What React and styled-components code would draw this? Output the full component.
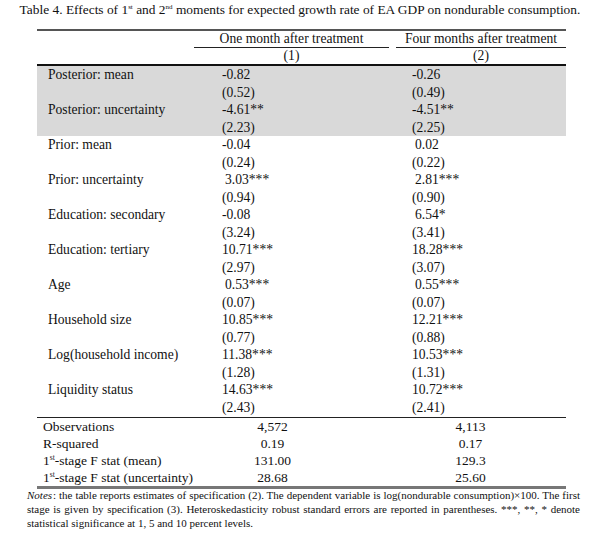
import { Fragment } from 'react';
import styled, { createGlobalStyle } from 'styled-components';

const GlobalStyle = createGlobalStyle`
    body {
        margin: 0;
        background: #fff;
        font-family: "Liberation Serif", "Times New Roman", serif;
        color: #111;
    }
`;

const Page = styled.div`
    width: 600px;
    height: 541px;
    padding-top: 2px;
    box-sizing: border-box;
`;

const Title = styled.div`
    font-size: 13.4px;
    line-height: 16px;
    text-align: center;
    white-space: nowrap;
    sup {
        font-size: 7px;
        vertical-align: 5px;
        line-height: 0;
    }
`;

const Table = styled.div`
    margin: 11px 0 0 37px;
    width: 529px;
    display: grid;
    grid-template-columns: 151px 207px 171px;
    font-size: 13.6px;
    border-top: 2px solid #555;
`;

const HeadCell = styled.div`
    height: 16px;
    line-height: 15px;
    text-align: center;
    white-space: nowrap;
    margin: ${p => (p.$first ? '0 6px 0 6px' : '0 0 0 1px')};
    border-bottom: ${p => (p.$rule ? '1px solid #222' : 'none')};
`;

const Thick = styled.div`
    grid-column: 1 / -1;
    height: 2px;
    background: #111;
`;

const Label = styled.div`
    height: 17.5px;
    line-height: 17.5px;
    padding-left: 11px;
    white-space: nowrap;
    background: ${p => (p.$shade ? '#d9d9d9' : 'transparent')};
`;

const Value = styled.div`
    height: 17.5px;
    line-height: 17.5px;
    white-space: nowrap;
    padding-left: ${p => p.$pad + (p.$indent ? 3 : 0)}px;
    background: ${p => (p.$shade ? '#d9d9d9' : 'transparent')};
`;

const Rule = styled.div`
    grid-column: 1 / -1;
    height: 1px;
    background: #222;
    margin-top: 1px;
`;

const StatLabel = styled.div`
    height: 17px;
    line-height: 17px;
    padding-left: 6px;
    font-size: 13.5px;
    white-space: nowrap;
    sup {
        font-size: 7.5px;
        vertical-align: 5px;
        line-height: 0;
    }
`;

const StatValue = styled.div`
    height: 17px;
    line-height: 17px;
    font-size: 13.5px;
    text-align: center;
    white-space: nowrap;
    padding-right: ${p => p.$shift}px;
`;

const BottomRule = styled.div`
    grid-column: 1 / -1;
    height: 3px;
    background: #777;
`;

const Notes = styled.p`
    margin: -1px 20px 0 27px;
    font-size: 11px;
    line-height: 14px;
    text-align: justify;
`;

const NoteTag = styled.span`
    font-style: italic;
    padding-right: 1px;
`;

const rows = [
    ['Posterior: mean', ['-0.82', false], ['-0.26', false], ['(0.52)'], ['(0.49)'], true],
    ['Posterior: uncertainty', ['-4.61**', false], ['-4.51**', false], ['(2.23)'], ['(2.25)'], true],
    ['Prior: mean', ['-0.04', false], ['0.02', true], ['(0.24)'], ['(0.22)']],
    ['Prior: uncertainty', ['3.03***', true], ['2.81***', true], ['(0.94)'], ['(0.90)']],
    ['Education: secondary', ['-0.08', false], ['6.54*', true], ['(3.24)'], ['(3.41)']],
    ['Education: tertiary', ['10.71***', false], ['18.28***', false], ['(2.97)'], ['(3.07)']],
    ['Age', ['0.53***', true], ['0.55***', true], ['(0.07)'], ['(0.07)']],
    ['Household size', ['10.85***', false], ['12.21***', false], ['(0.77)'], ['(0.88)']],
    ['Log(household income)', ['11.38***', false], ['10.53***', false], ['(1.28)'], ['(1.31)']],
    ['Liquidity status', ['14.63***', false], ['10.72***', false], ['(2.43)'], ['(2.41)']],
];

const stats = [
    [<>Observations</>, '4,572', '4,113'],
    [<>R-squared</>, '0.19', '0.17'],
    [<>1<sup>st</sup>-stage F stat (mean)</>, '131.00', '129.3'],
    [<>1<sup>st</sup>-stage F stat (uncertainty)</>, '28.68', '25.60'],
];

const App = () => (
    <Page>
        <GlobalStyle />
        <Title>
            Table 4. Effects of 1<sup>st</sup> and 2<sup>nd</sup> moments for expected growth rate of EA GDP on nondurable consumption.
        </Title>
        <Table>
            <HeadCell />
            <HeadCell $first $rule>One month after treatment</HeadCell>
            <HeadCell $rule>Four months after treatment</HeadCell>
            <HeadCell />
            <HeadCell $first>(1)</HeadCell>
            <HeadCell>(2)</HeadCell>
            <Thick />
            {rows.map(([label, a, b, seA, seB, shade]) => (
                <Fragment key={label}>
                    <Label $shade={shade}>{label}</Label>
                    <Value $shade={shade} $pad={34} $indent={a[1]}>{a[0]}</Value>
                    <Value $shade={shade} $pad={17} $indent={b[1]}>{b[0]}</Value>
                    <Label $shade={shade} />
                    <Value $shade={shade} $pad={34}>{seA[0]}</Value>
                    <Value $shade={shade} $pad={17}>{seB[0]}</Value>
                </Fragment>
            ))}
            <Rule />
            {stats.map(([label, a, b], i) => (
                <Fragment key={i}>
                    <StatLabel>{label}</StatLabel>
                    <StatValue $shift={38}>{a}</StatValue>
                    <StatValue $shift={20}>{b}</StatValue>
                </Fragment>
            ))}
            <BottomRule />
        </Table>
        <Notes>
            <NoteTag>Notes</NoteTag>: the table reports estimates of specification (2). The dependent variable is log(nondurable consumption)×100. The first stage is given by specification (3). Heteroskedasticity robust standard errors are reported in parentheses. ***, **, * denote statistical significance at 1, 5 and 10 percent levels.
        </Notes>
    </Page>
);

export default App;
